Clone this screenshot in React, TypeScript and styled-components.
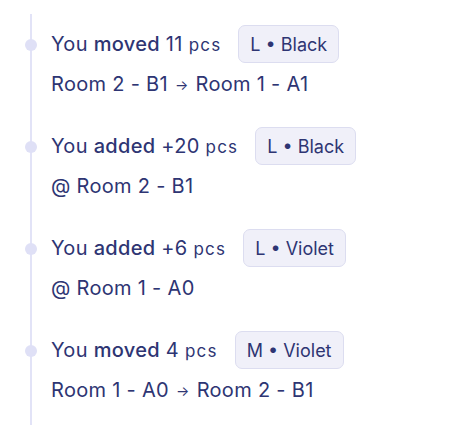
import styled, { createGlobalStyle } from 'styled-components';

const GlobalStyle = createGlobalStyle`
  body {
    margin: 0;
    background: #ffffff;
    font-family: Inter, "Noto Sans", sans-serif;
  }
`;

type Entry = {
  verb: string;
  amount: string;
  badge: string;
  from: string;
  to?: string;
};

const entries: Entry[] = [
  { verb: 'moved', amount: '11', badge: 'L • Black', from: 'Room 2 - B1', to: 'Room 1 - A1' },
  { verb: 'added', amount: '+20', badge: 'L • Black', from: '@ Room 2 - B1' },
  { verb: 'added', amount: '+6', badge: 'L • Violet', from: '@ Room 1 - A0' },
  { verb: 'moved', amount: '4', badge: 'M • Violet', from: 'Room 1 - A0', to: 'Room 2 - B1' },
];

export default function App() {
  return (
    <>
      <GlobalStyle />
      <Timeline>
        {entries.map((e, i) => (
          <Item key={i}>
            <Header>
              <Title>
                You <Strong>{e.verb}</Strong> {e.amount} <Unit>pcs</Unit>
              </Title>
              <Badge>{e.badge}</Badge>
            </Header>
            <Detail>
              {e.from}
              {e.to && (
                <>
                  <Arrow>→</Arrow>
                  {e.to}
                </>
              )}
            </Detail>
          </Item>
        ))}
      </Timeline>
    </>
  );
}

const Timeline = styled.ul`
  list-style: none;
  margin: 14px 0 0 30px;
  padding: 0 0 3px 19px;
  border-left: 2px solid #e2e3f7;
`;

const Item = styled.li`
  position: relative;
  height: 102px;
  box-sizing: border-box;
  padding-top: 11px;

  &::before {
    content: '';
    position: absolute;
    left: -26px;
    top: 25px;
    width: 12px;
    height: 12px;
    border-radius: 50%;
    background: #dfe0f6;
  }
`;

const Header = styled.div`
  display: flex;
  align-items: center;
  gap: 17px;
  height: 38px;
`;

const Title = styled.span`
  font-size: 20px;
  letter-spacing: 0.3px;
  color: #2e3573;
  white-space: nowrap;
`;

const Strong = styled.span`
  font-weight: 500;
`;

const Unit = styled.span`
  font-size: 17px;
  letter-spacing: 1.2px;
`;

const Badge = styled.span`
  display: inline-flex;
  align-items: center;
  height: 38px;
  box-sizing: border-box;
  padding: 0 11px;
  border: 1px solid #dcddf0;
  border-radius: 7px;
  background: #f0f0f9;
  font-size: 18px;
  color: #2e3573;
  white-space: nowrap;
`;

const Detail = styled.div`
  margin-top: 8px;
  font-size: 20px;
  letter-spacing: 0.3px;
  line-height: 26px;
  color: #2e3573;
  white-space: nowrap;
`;

const Arrow = styled.span`
  font-size: 14px;
  margin: 0 7px;
  vertical-align: 1px;
`;
